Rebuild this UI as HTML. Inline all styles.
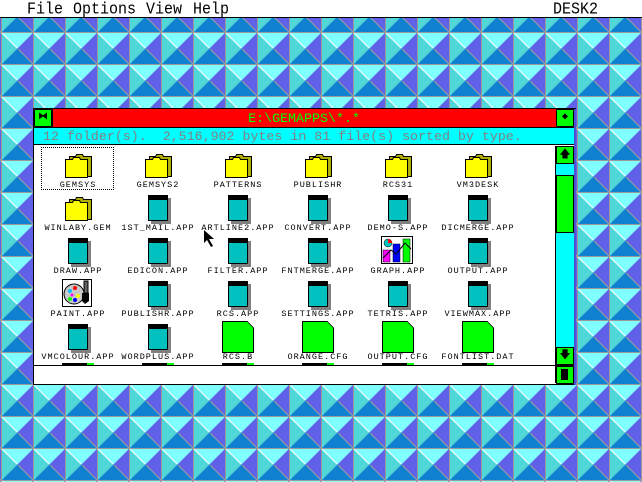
<!DOCTYPE html>
<html><head><meta charset="utf-8"><style>
body{margin:0;width:642px;height:482px;overflow:hidden;position:relative;font-family:"Liberation Mono",monospace;background:#fff}
.bg{position:absolute;left:0;top:18px}
.menu{position:absolute;left:0;top:0;width:642px;height:17px;background:#fff;border-bottom:1px solid #000;font-size:15px;line-height:19px}
.menu span{position:absolute;top:0;transform:scaleY(1.1)}
.a{position:absolute}
.it{position:absolute;width:80px;height:43px}
.lb{position:absolute;left:0;top:28px;width:80px;text-align:center;font-size:8.5px;letter-spacing:1px;line-height:10px;color:#000}
.fold{position:absolute;left:27px;top:1px;width:27px;height:25px}
.app{position:absolute;left:30px;top:0;width:18px;height:20px;border:1px solid #000;border-top:5px solid #000;background:#00c0c0;box-shadow:3px 3px 0 #808080}
.doc{position:absolute;left:24px;top:-3px;width:30px;height:30px;border:1px solid #000;background:#00ff00}
.doc:after{content:"";position:absolute;right:-1px;top:-1px;width:7px;height:7px;background:linear-gradient(225deg,#fff 0 48%,#000 48% 56%,#00ff00 56%);}
.gbox{position:absolute;background:#00ff00;border:1px solid #000}
</style></head><body>
<svg class="bg" width="642" height="464">
<defs><pattern id="t" width="32" height="32" patternUnits="userSpaceOnUse" patternTransform="translate(1,-18)">
<rect width="32" height="32" fill="#9a9a9a"/>
<polygon points="1,1 32,1 16.5,16.5" fill="#80ffff"/>
<polygon points="1,1 1,32 16.5,16.5" fill="#50d8d8"/>
<polygon points="32,1 32,32 16.5,16.5" fill="#6060e8"/>
<polygon points="1,32 32,32 16.5,16.5" fill="#1080d0"/>
<line x1="1" y1="1" x2="16" y2="16" stroke="#fff" stroke-width="1"/>
<line x1="32" y1="32" x2="17" y2="17" stroke="#a0a0a0" stroke-width="1"/>
</pattern>
<symbol id="f" viewBox="0 0 27 25"><path d="M4.5 3.5h6l1-2h6l1 2h8v20h-22z" fill="#b0b000" stroke="#000"/><path d="M0.5 6.5h7l1-2h6l1 2h7v18h-22z" fill="#ffff00" stroke="#000"/></symbol>
</defs>
<rect width="642" height="464" fill="url(#t)"/></svg>
<div class="menu"><span style="left:27px">File</span><span style="left:73px">Options</span><span style="left:146px">View</span><span style="left:193px">Help</span><span style="left:553px">DESK2</span></div>

<div class="a" style="left:33px;top:108px;width:541px;height:275px;background:#fff;border:1px solid #000"></div>
<div class="a" style="left:34px;top:109px;width:540px;height:18px;background:#ff0000;border-bottom:1px solid #000"></div>
<div class="gbox" style="left:34px;top:109px;width:16px;height:16px;font-size:10px;line-height:16px;text-align:center">⧓</div>
<div class="a" style="left:51px;top:109px;width:2px;height:18px;background:#000"></div>
<div class="gbox" style="left:556px;top:109px;width:16px;height:16px;font-size:10px;line-height:16px;text-align:center">◆</div>
<div class="a" style="left:34px;top:109px;width:540px;height:18px;text-align:center;color:#00ff00;font-size:13.3px;line-height:19px">E:\GEMAPPS\*.*</div>
<div class="a" style="left:34px;top:128px;width:540px;height:17px;background:#00ffff;border-bottom:1px solid #000;color:#808080;font-size:13.3px;line-height:18px;padding-left:9px;box-sizing:border-box;white-space:pre">12 folder(s).  2,516,902 bytes in 81 file(s) sorted by type.</div>
<div class="a" style="left:555px;top:146px;width:1px;height:237px;background:#000"></div>
<div class="a" style="left:556px;top:146px;width:18px;height:219px;background:#00ffff"></div>
<div class="gbox" style="left:556px;top:146px;width:16px;height:16px;font-size:11px;line-height:16px;text-align:center">🡅</div>
<div class="gbox" style="left:556px;top:175px;width:16px;height:56px"></div>
<div class="gbox" style="left:556px;top:347px;width:16px;height:16px;font-size:11px;line-height:16px;text-align:center">🡇</div>
<div class="a" style="left:34px;top:365px;width:540px;height:1px;background:#000"></div>
<div class="gbox" style="left:556px;top:366px;width:16px;height:16px"><div class="a" style="left:4px;top:2px;width:7px;height:11px;background:#000"></div></div>
<div class="a" style="left:574px;top:109px;width:2px;height:276px;background:#5050d0"></div>

<div class="a" style="left:41px;top:147px;width:71px;height:41px;border:1px dotted #000"></div>

<div class="it" style="left:38px;top:152px"><svg class="fold"><use href="#f"/></svg><div class="lb">GEMSYS</div></div>
<div class="it" style="left:118px;top:152px"><svg class="fold"><use href="#f"/></svg><div class="lb">GEMSYS2</div></div>
<div class="it" style="left:198px;top:152px"><svg class="fold"><use href="#f"/></svg><div class="lb">PATTERNS</div></div>
<div class="it" style="left:278px;top:152px"><svg class="fold"><use href="#f"/></svg><div class="lb">PUBLISHR</div></div>
<div class="it" style="left:358px;top:152px"><svg class="fold"><use href="#f"/></svg><div class="lb">RCS31</div></div>
<div class="it" style="left:438px;top:152px"><svg class="fold"><use href="#f"/></svg><div class="lb">VM3DESK</div></div>

<div class="it" style="left:38px;top:195px"><svg class="fold"><use href="#f"/></svg><div class="lb">WINLABY.GEM</div></div>
<div class="it" style="left:118px;top:195px"><div class="app"></div><div class="lb">1ST_MAIL.APP</div></div>
<div class="it" style="left:198px;top:195px"><div class="app"></div><div class="lb">ARTLINE2.APP</div></div>
<div class="it" style="left:278px;top:195px"><div class="app"></div><div class="lb">CONVERT.APP</div></div>
<div class="it" style="left:358px;top:195px"><div class="app"></div><div class="lb">DEMO-S.APP</div></div>
<div class="it" style="left:438px;top:195px"><div class="app"></div><div class="lb">DICMERGE.APP</div></div>

<div class="it" style="left:38px;top:238px"><div class="app"></div><div class="lb">DRAW.APP</div></div>
<div class="it" style="left:118px;top:238px"><div class="app"></div><div class="lb">EDICON.APP</div></div>
<div class="it" style="left:198px;top:238px"><div class="app"></div><div class="lb">FILTER.APP</div></div>
<div class="it" style="left:278px;top:238px"><div class="app"></div><div class="lb">FNTMERGE.APP</div></div>
<div class="it" style="left:358px;top:238px"><svg class="a" style="left:23px;top:-2px" width="32" height="28" viewBox="0 0 32 28"><rect x="0.5" y="0.5" width="31" height="27" fill="#fff" stroke="#000"/><rect x="2" y="14" width="7" height="12" fill="#ff00ff" stroke="#000" stroke-width=".5"/><rect x="12" y="8" width="7" height="18" fill="#0000ff" stroke="#000" stroke-width=".5"/><rect x="22" y="3" width="7" height="23" fill="#00ff00" stroke="#000" stroke-width=".5"/><circle cx="7" cy="7" r="4" fill="#00c0c0" stroke="#000" stroke-width=".5"/><path d="M7 7V3a4 4 0 0 1 4 4z" fill="#ff0000"/><path d="M2 22l8-8 5 4 9-11 6 6" fill="none" stroke="#000"/></svg><div class="lb">GRAPH.APP</div></div>
<div class="it" style="left:438px;top:238px"><div class="app"></div><div class="lb">OUTPUT.APP</div></div>

<div class="it" style="left:38px;top:281px"><svg class="a" style="left:24px;top:-2px" width="30" height="28" viewBox="0 0 30 28"><rect x="0.5" y="0.5" width="29" height="27" fill="#fff" stroke="#000"/><ellipse cx="12" cy="15" rx="10" ry="10" fill="#c8c8c8" stroke="#000"/><circle cx="8" cy="12" r="2" fill="#00c0ff"/><circle cx="13" cy="9" r="2" fill="#ff0000"/><circle cx="10" cy="16" r="1.5" fill="#ff00ff"/><circle cx="16" cy="17" r="2" fill="#ffff00"/><circle cx="8" cy="20" r="2" fill="#00ff00"/><circle cx="13" cy="21" r="2" fill="#0000ff"/><rect x="22" y="2" width="4" height="12" fill="#606060" stroke="#000"/><path d="M20 14h7v8l-4 3-3-3z" fill="#000"/></svg><div class="lb">PAINT.APP</div></div>
<div class="it" style="left:118px;top:281px"><div class="app"></div><div class="lb">PUBLISHR.APP</div></div>
<div class="it" style="left:198px;top:281px"><div class="app"></div><div class="lb">RCS.APP</div></div>
<div class="it" style="left:278px;top:281px"><div class="app"></div><div class="lb">SETTINGS.APP</div></div>
<div class="it" style="left:358px;top:281px"><div class="app"></div><div class="lb">TETRIS.APP</div></div>
<div class="it" style="left:438px;top:281px"><div class="app"></div><div class="lb">VIEWMAX.APP</div></div>

<div class="it" style="left:38px;top:324px"><div class="app"></div><div class="lb">VMCOLOUR.APP</div></div>
<div class="it" style="left:118px;top:324px"><div class="app"></div><div class="lb">WORDPLUS.APP</div></div>
<div class="it" style="left:198px;top:324px"><div class="doc"></div><div class="lb">RCS.B</div></div>
<div class="it" style="left:278px;top:324px"><div class="doc"></div><div class="lb">ORANGE.CFG</div></div>
<div class="it" style="left:358px;top:324px"><div class="doc"></div><div class="lb">OUTPUT.CFG</div></div>
<div class="it" style="left:438px;top:324px"><div class="doc"></div><div class="lb">FONTLIST.DAT</div></div>

<div class="a" style="left:62px;top:363px;width:25px;height:2px;background:#000"></div><div class="a" style="left:87px;top:363px;width:7px;height:2px;background:#00ff00"></div>
<div class="a" style="left:142px;top:363px;width:25px;height:2px;background:#000"></div><div class="a" style="left:167px;top:363px;width:7px;height:2px;background:#00ff00"></div>
<div class="a" style="left:222px;top:363px;width:25px;height:2px;background:#000"></div><div class="a" style="left:247px;top:363px;width:7px;height:2px;background:#00ff00"></div>
<div class="a" style="left:302px;top:363px;width:25px;height:2px;background:#000"></div><div class="a" style="left:327px;top:363px;width:7px;height:2px;background:#00ff00"></div>
<div class="a" style="left:382px;top:363px;width:25px;height:2px;background:#000"></div><div class="a" style="left:407px;top:363px;width:7px;height:2px;background:#00ff00"></div>
<div class="a" style="left:462px;top:363px;width:25px;height:2px;background:#000"></div><div class="a" style="left:487px;top:363px;width:7px;height:2px;background:#00ff00"></div>

<svg class="a" style="left:204px;top:230px" width="12" height="18" viewBox="0 0 12 18"><path d="M0 0v13l3-3 4 7 2-1-4-7h5z" fill="#000"/></svg>
</body></html>
